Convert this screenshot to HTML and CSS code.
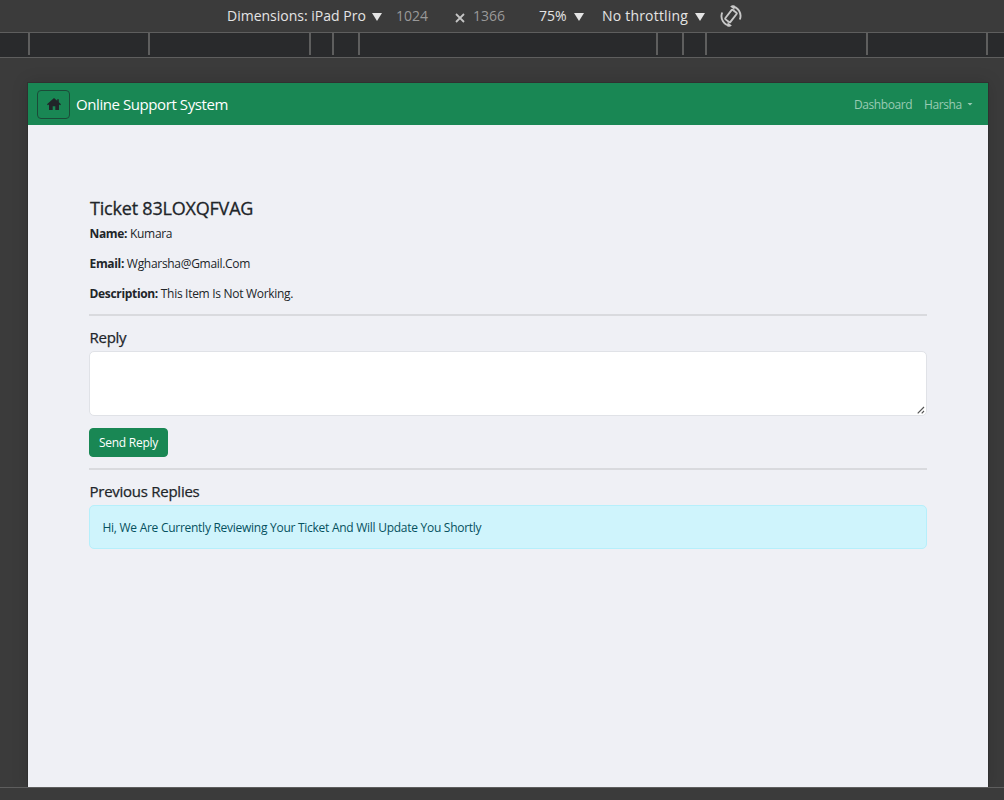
FILE: index.html
```html
<!DOCTYPE html>
<html lang="en">
<head>
<meta charset="utf-8">
<title>Online Support System</title>
<link rel="stylesheet" href="styles.css">
</head>
<body>
<div class="device">
  <header class="toolbar">
    <span class="tool tool-dimensions">Dimensions: iPad Pro</span><i class="arrow"></i>
    <span class="tool muted tool-width">1024</span>
    <svg class="times" width="10" height="10" viewBox="0 0 10 10"><path d="M1 1l8 8M9 1L1 9" stroke="#c4c4c4" stroke-width="1.8"/></svg>
    <span class="tool muted tool-height">1366</span>
    <span class="tool tool-zoom">75%</span><i class="arrow"></i>
    <span class="tool tool-throttle">No throttling</span><i class="arrow"></i>
    <svg class="rotate" width="22" height="24" viewBox="0 0 22 24" fill="none" stroke="#c8c8c8" stroke-width="1.9">
      <rect x="7.800" y="6" width="6.400" height="12" rx="1" transform="rotate(38 11 12)"/>
      <path d="M11.500 2.200A9.700 9.700 0 0 1 19.800 15.500M10.500 21.800A9.700 9.700 0 0 1 2.200 8.500"/>
      <path d="M10 2.200L14.500 1.200L14.500 5.800zM12 21.800L7.500 22.800L7.500 18.200z" fill="#c8c8c8" stroke="none"/>
    </svg>
  </header>
  <div class="ruler">
    <b class="r1"></b><b class="r2"></b><b class="r3"></b><b class="r4"></b><b class="r5"></b><b class="r6"></b><b class="r7"></b><b class="r8"></b><b class="r9"></b><b class="r10"></b>
  </div>
  <div class="stage">
    <div class="screen">
      <nav class="navbar">
        <a class="home"><svg width="14" height="12" viewBox="0 0 14 12" fill="#212529"><path d="M7 0L0 6.200l.8 1L2 6.400V12h3.700V8.200h2.600V12H12V6.400l1.200.8.800-1-2.200-2V1.200h-1.600v1.600z"/></svg></a>
        <span class="brand">Online Support System</span>
        <a class="nav-link dash">Dashboard</a>
        <a class="nav-link user">Harsha</a><i class="caret"></i>
      </nav>
      <main class="content">
        <h1 class="ticket">Ticket 83LOXQFVAG</h1>
        <p class="row"><strong>Name:</strong> Kumara</p>
        <p class="row"><strong>Email:</strong> Wgharsha@Gmail.Com</p>
        <p class="row last"><strong>Description:</strong> This Item Is Not Working.</p>
        <hr class="rule">
        <h2 class="heading">Reply</h2>
        <div class="reply"><svg width="8" height="8" viewBox="0 0 8 8" stroke="#555" stroke-width="1.200"><path d="M.7 7.300L7 1M4.700 7.300L7 5"/></svg></div>
        <button class="send" type="button">Send Reply</button>
        <hr class="rule">
        <h2 class="heading">Previous Replies</h2>
        <div class="alert">Hi, We Are Currently Reviewing Your Ticket And Will Update You Shortly</div>
      </main>
    </div>
  </div>
  <footer class="bottom"></footer>
</div>
</body>
</html>
```
FILE: styles.css
```css
* { box-sizing: border-box; }
body { margin: 0; background: #3b3b3b; font-family: "Open Sans", "Noto Sans", sans-serif; color: #212529; }
.device { width: 1004px; height: 800px; display: flex; flex-direction: column; overflow: hidden; }
.toolbar { height: 33px; flex: none; display: flex; align-items: center; padding-left: 227px; border-bottom: 1px solid #5e5e5e; white-space: nowrap; }
.tool { font-size: 14px; line-height: 20px; color: #e4e4e4; }
.muted { color: #999; }
.tool-dimensions { width: 145px; }
.tool-width { width: 59px; margin-left: 14px; }
.times { margin-top: 4px; }
.tool-height { width: 66px; margin-left: 8px; }
.tool-zoom { width: 35px; }
.tool-throttle { width: 93px; margin-left: 18px; letter-spacing: .2px; }
.arrow { width: 10px; height: 8px; background: #e4e4e4; clip-path: polygon(0 0, 100% 0, 50% 100%); margin-top: 2px; }
.rotate { margin-left: 15px; }
.ruler { height: 25px; flex: none; display: flex; background: #292a2c; border-bottom: 1px solid #5e5e5e; }
.ruler b { height: 22px; border-right: 2px solid #5e5e5e; }
.r1 { width: 30px; } .r2 { width: 120px; } .r3 { width: 161px; } .r4 { width: 23px; } .r5 { width: 26px; }
.r6 { width: 298px; } .r7 { width: 26px; } .r8 { width: 23px; } .r9 { width: 161px; } .r10 { width: 120px; }
.stage { height: 729px; flex: none; padding: 25px 16px 0 28px; overflow: hidden; }
.screen { height: 704px; background: #eff0f5; box-shadow: 0 0 0 1px #303030, 0 0 16px rgba(0, 0, 0, .15); }
.navbar { height: 42px; background: #198754; display: flex; align-items: center; padding: 0 15px 0 9px; white-space: nowrap; }
.home { width: 33px; height: 29px; border: 1px solid #1b4b38; border-radius: 4px; display: flex; align-items: center; justify-content: center; }
.brand { margin-left: 6px; font-size: 15px; line-height: 22px; color: #fff; letter-spacing: -.42px; }
.nav-link { font-size: 12px; line-height: 18px; color: #98cbb3; letter-spacing: -.42px; padding-top: 1px; }
.dash { margin-left: auto; width: 70px; }
.user { width: 43px; }
.caret { width: 6px; height: 3px; background: #98cbb3; clip-path: polygon(0 0, 100% 0, 50% 100%); }
.content { padding: 72px 61px 0; }
.ticket { margin: 0 0 6px 1px; font-size: 18px; line-height: 22px; font-weight: 500; letter-spacing: -.2px; -webkit-text-stroke: .3px #212529; }
.row { margin: 0 0 12px .5px; font-size: 12px; line-height: 18px; letter-spacing: -.3px; white-space: nowrap; }
.row strong { letter-spacing: -.33px; }
.last { margin-bottom: 11px; }
.rule { margin: 0; height: 2px; border: 0; background: #d9dade; }
.heading { margin: 12px 0 5px .5px; font-size: 15px; line-height: 18px; font-weight: 500; letter-spacing: -.26px; -webkit-text-stroke: .25px #212529; }
.reply { height: 65px; background: #fff; border: 1px solid #e0e2e7; border-radius: 5px; display: flex; align-items: flex-end; justify-content: flex-end; padding: 1px; }
.send { display: block; width: 79px; height: 29px; margin: 12px 0 11px; padding: 0; border: 1px solid #198754; border-radius: 4px; background: #198754; color: #fff; font: 12px/18px "Open Sans", sans-serif; letter-spacing: -.25px; }
.alert { height: 44px; padding: 13px 12px 11px 12.5px; border: 1px solid #b6effb; border-radius: 5px; background: #cff4fc; color: #055160; font-size: 12px; line-height: 18px; letter-spacing: -.27px; white-space: nowrap; }
.bottom { height: 13px; flex: none; border-top: 1px solid #5e5e5e; }
```
